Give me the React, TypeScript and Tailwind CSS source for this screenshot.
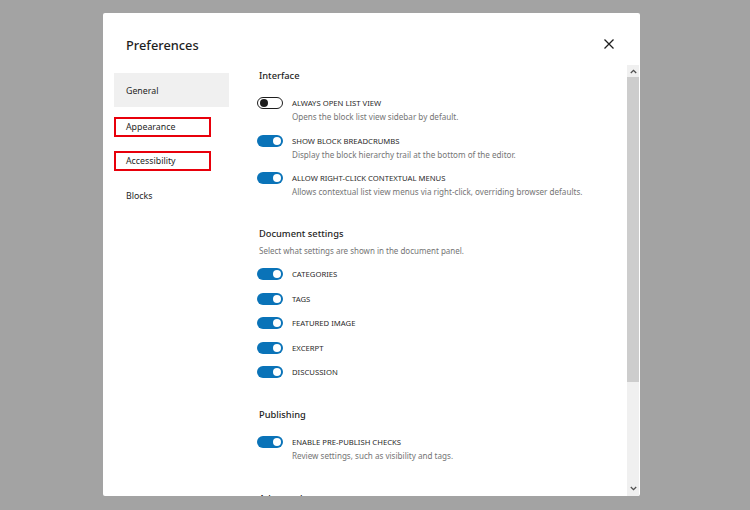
import React from 'react'

type Item = { label: string; desc?: string; on: boolean }

const interfaceItems: Item[] = [
  { label: 'Always open list view', desc: 'Opens the block list view sidebar by default.', on: false },
  { label: 'Show block breadcrumbs', desc: 'Display the block hierarchy trail at the bottom of the editor.', on: true },
  {
    label: 'Allow right-click contextual menus',
    desc: 'Allows contextual list view menus via right-click, overriding browser defaults.',
    on: true,
  },
]

const documentItems: Item[] = [
  { label: 'Categories', on: true },
  { label: 'Tags', on: true },
  { label: 'Featured image', on: true },
  { label: 'Excerpt', on: true },
  { label: 'Discussion', on: true },
]

function Toggle({ on }: { on: boolean }) {
  if (on) {
    return (
      <div className="w-[26px] h-[12px] shrink-0 rounded-full bg-[#0a73b8] flex items-center justify-end pr-[2px]">
        <div className="w-[8px] h-[8px] rounded-full bg-white" />
      </div>
    )
  }
  return (
    <div className="w-[26px] h-[12px] shrink-0 rounded-full bg-white border border-[#1e1e1e] flex items-center pl-[2px]">
      <div className="w-[8px] h-[8px] rounded-full bg-[#1e1e1e]" />
    </div>
  )
}

function Option({ item }: { item: Item }) {
  return (
    <div className="flex items-start">
      <Toggle on={item.on} />
      <div className="ml-[9px] flex flex-col whitespace-nowrap">
        <div className="text-[7.7px] leading-[12px] uppercase text-[#2a2a2a]">{item.label}</div>
        {item.desc && <div className="mt-[2px] text-[8.1px] leading-[12px] text-[#757575]">{item.desc}</div>}
      </div>
    </div>
  )
}

function Heading({ children, className }: { children: React.ReactNode; className?: string }) {
  return (
    <div className={'text-[9.3px] leading-[15px] font-medium text-[#1e1e1e] whitespace-nowrap ' + (className ?? '')}>
      {children}
    </div>
  )
}

function SideItem({ label, active, marked }: { label: string; active?: boolean; marked?: boolean }) {
  return (
    <div className={'h-[34px] w-[115px] flex items-center ' + (active ? 'bg-[#f0f0f0]' : '')}>
      {marked ? (
        <div className="w-[97px] h-[20px] border-2 border-[#e8000b] flex items-center pl-[10px] pt-[1px] text-[8.8px] text-[#1e1e1e]">
          {label}
        </div>
      ) : (
        <div className="pl-[12px] pt-[4px] text-[8.8px] text-[#1e1e1e]">{label}</div>
      )}
    </div>
  )
}

function Scrollbar() {
  return (
    <div className="w-[12px] mr-[1px] mt-[2px] bg-[#f0f0f0] flex flex-col">
      <div className="h-[12px] flex items-center justify-center">
        <svg width="7" height="5" viewBox="0 0 7 5">
          <path d="M0.8 4 L3.5 1.3 L6.2 4" fill="none" stroke="#505050" strokeWidth="1.3" />
        </svg>
      </div>
      <div className="h-[305px] bg-[#cdcdcd]" />
      <div className="flex-1" />
      <div className="h-[12px] flex items-center justify-center mb-[2px]">
        <svg width="7" height="5" viewBox="0 0 7 5">
          <path d="M0.8 1 L3.5 3.7 L6.2 1" fill="none" stroke="#505050" strokeWidth="1.3" />
        </svg>
      </div>
    </div>
  )
}

export default function App() {
  return (
    <div className="w-[750px] h-[510px] bg-[#a3a3a3] pt-[13px] pl-[103px] overflow-hidden font-['Noto_Sans',sans-serif]">
      <div className="w-[537px] h-[483px] bg-white rounded-[2px] flex flex-col">
        <div className="h-[50px] shrink-0 flex items-end justify-between pl-[23px] pr-[26px] pb-[8px]">
          <div className="text-[12.8px] leading-[20px] font-medium text-[#1e1e1e]">Preferences</div>
          <svg width="10" height="10" viewBox="0 0 10 10" className="mb-[6px]">
            <path d="M0.5 0.5 L9.5 9.5 M9.5 0.5 L0.5 9.5" stroke="#1e1e1e" strokeWidth="1.3" />
          </svg>
        </div>
        <div className="flex-1 min-h-0 flex">
          <div className="w-[137px] shrink-0 pl-[11px] pt-[10px] flex flex-col">
            <SideItem label="General" active />
            <div className="mt-[3px]" />
            <SideItem label="Appearance" marked />
            <SideItem label="Accessibility" marked />
            <SideItem label="Blocks" />
          </div>
          <div className="flex-1 min-w-0 overflow-hidden pl-[17px] pt-[4.5px]">
            <Heading className="pl-[2px]">Interface</Heading>
            <div className="mt-[14.5px] flex flex-col gap-[11.5px]">
              {interfaceItems.map((it) => (
                <Option key={it.label} item={it} />
              ))}
            </div>
            <Heading className="pl-[2px] mt-[27.5px]">Document settings</Heading>
            <div className="pl-[2px] mt-[4.5px] text-[8px] leading-[12px] text-[#757575] whitespace-nowrap">
              Select what settings are shown in the document panel.
            </div>
            <div className="mt-[11px] flex flex-col gap-[12.5px]">
              {documentItems.map((it) => (
                <Option key={it.label} item={it} />
              ))}
            </div>
            <Heading className="pl-[2px] mt-[28.5px]">Publishing</Heading>
            <div className="mt-[14.5px]">
              <Option item={{ label: 'Enable pre-publish checks', desc: 'Review settings, such as visibility and tags.', on: true }} />
            </div>
            <Heading className="pl-[2px] mt-[28.5px]">Advanced</Heading>
          </div>
          <Scrollbar />
        </div>
      </div>
    </div>
  )
}
